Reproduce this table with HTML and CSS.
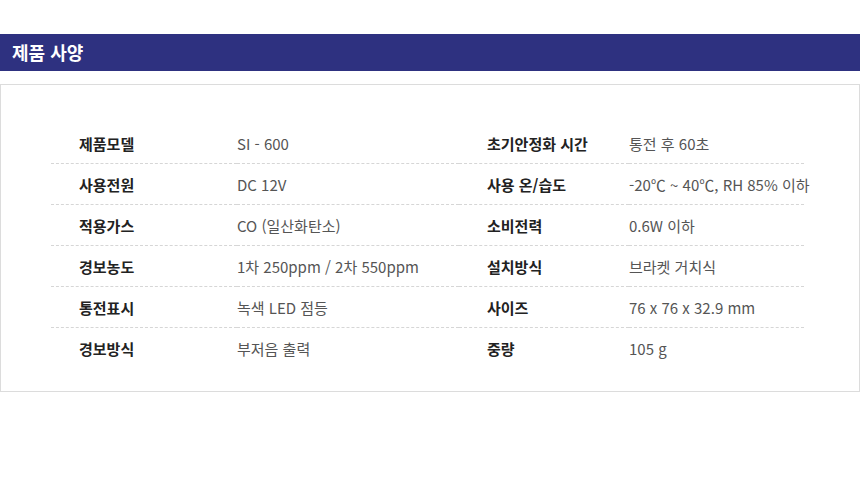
FILE: index.html
```html
<!DOCTYPE html>
<html lang="ko">

<head>
  <meta charset="UTF-8">
  <meta name="viewport" content="width=device-width, initial-scale=1.0">
  <title>제품 사양</title>
  <link rel="stylesheet" href="styles.css">
</head>

<body>
  <div class="spec">
    <h2 class="spec-title">제품 사양</h2>
    <div class="spec-box">
      <table class="spec-table">
        <colgroup>
          <col class="col-label">
          <col class="col-value">
          <col class="col-label2">
          <col class="col-value2">
        </colgroup>
        <tr>
          <th>제품모델</th>
          <td>SI - 600</td>
          <th>초기안정화 시간</th>
          <td>통전 후 60초</td>
        </tr>
        <tr>
          <th>사용전원</th>
          <td>DC 12V</td>
          <th>사용 온/습도</th>
          <td>-20℃ ~ 40℃, RH 85% 이하</td>
        </tr>
        <tr>
          <th>적용가스</th>
          <td>CO (일산화탄소)</td>
          <th>소비전력</th>
          <td>0.6W 이하</td>
        </tr>
        <tr>
          <th>경보농도</th>
          <td>1차 250ppm / 2차 550ppm</td>
          <th>설치방식</th>
          <td>브라켓 거치식</td>
        </tr>
        <tr>
          <th>통전표시</th>
          <td>녹색 LED 점등</td>
          <th>사이즈</th>
          <td>76 x 76 x 32.9 mm</td>
        </tr>
        <tr>
          <th>경보방식</th>
          <td>부저음 출력</td>
          <th>중량</th>
          <td>105 g</td>
        </tr>
      </table>
    </div>
  </div>
</body>

</html>
```

FILE: styles.css
```css
body {
  margin: 0;
  font-family: "Noto Sans CJK KR", "Noto Sans", sans-serif;
  background-color: #fff;
  color: #333;
}

.spec {
  padding-top: 34px;
}

.spec-title {
  margin: 0;
  height: 37px;
  line-height: 37px;
  padding-left: 12px;
  background-color: #2e3180;
  color: #fff;
  font-size: 18px;
  font-weight: bold;
}

.spec-box {
  margin-top: 13px;
  border: 1px solid #dcdcdc;
  padding: 38px 0 23px 50px;
}

.spec-table {
  border-collapse: collapse;
  width: 753px;
  table-layout: fixed;
}

.col-label {
  width: 186px;
}

.col-value {
  width: 222px;
}

.col-label2 {
  width: 170px;
}

.col-value2 {
  width: 175px;
}

.spec-table th,
.spec-table td {
  height: 40px;
  padding: 0 0 0 28px;
  text-align: left;
  font-size: 15px;
  white-space: nowrap;
  border-bottom: 1px dashed #d6d6d6;
}

.spec-table td {
  padding-left: 0;
  font-weight: normal;
  color: #555;
}

.spec-table th {
  font-weight: bold;
  color: #222;
}

.spec-table tr:last-child th,
.spec-table tr:last-child td {
  border-bottom: none;
}
```
